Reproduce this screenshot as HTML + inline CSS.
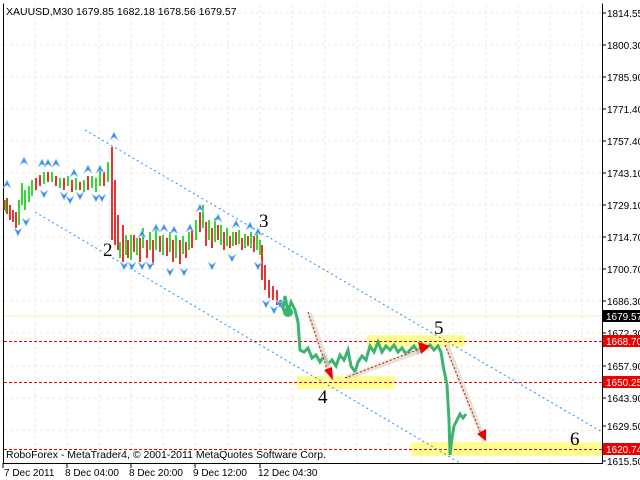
<!DOCTYPE html>
<html><head><meta charset="utf-8"><style>
html,body{margin:0;padding:0;background:#fff;}
svg{display:block;font-family:"Liberation Sans",sans-serif;}
</style></head><body>
<svg width="640" height="480" viewBox="0 0 640 480" xmlns="http://www.w3.org/2000/svg">
<rect width="640" height="480" fill="#fff"/>
<g stroke="#ecebd0" stroke-width="1" stroke-dasharray="3,3">
<path d="M35 4V463M67 4V463M99 4V463M131 4V463M163 4V463M195 4V463M228 4V463M260 4V463M292 4V463M325 4V463M357 4V463M389 4V463M421 4V463M453 4V463M486 4V463M518 4V463M550 4V463M582 4V463"/>
<path d="M4 13H602M4 45H602M4 77H602M4 109H602M4 141H602M4 173H602M4 205H602M4 237H602M4 269H602M4 301H602M4 333H602M4 366H602M4 398H602M4 430H602"/>
</g>
<path d="M3.5 3.5V463.5H602.5V3.5" fill="none" stroke="#000"/>
<path d="M4 316H602" stroke="#f3efc0"/>
<rect x="367" y="335" width="98" height="12" fill="#ffff80" opacity="0.85"/>
<rect x="297" y="376" width="98" height="13" fill="#ffff80" opacity="0.85"/>
<rect x="411" y="442" width="191" height="14" fill="#ffff80" opacity="0.85"/>
<g stroke="#e00" stroke-dasharray="3,2">
<path d="M4 341.5H602M4 382.5H602M4 449.5H602"/>
</g>
<g stroke="#1e90ff" stroke-dasharray="2,3" fill="none">
<path d="M85 130L602 432"/>
<path d="M35 212L460 463"/>
</g>
<g stroke-width="1.6">
<path stroke="#e00000" d="M4 200V210M7 198V214M10 205V220M13 210V222M16 212V228M36 178V190M40 175V186M48 172V182M56 176V186M64 178V190M72 180V192M80 182V190M88 176V190M104 172V186M112 147V240M115 180V245M118 215V250M123 225V262M128 240V258M134 235V252M140 238V262M147 240V258M153 240V265M160 236V252M167 238V256M173 240V262M180 240V264M186 242V258M192 230V248M200 212V232M206 222V246M212 228V248M218 225V240M224 232V250M230 236V248M236 232V245M242 238V250M248 236V246M254 236V252M262 245V280M265 265V290M269 280V298M273 286V300M277 290V305"/>
<path stroke="#00d000" d="M6 200V212M19 200V225M22 183V205M25 190V210M29 186V202M32 180V196M44 172V184M52 172V182M60 178V188M68 176V186M76 178V190M84 180V192M92 176V188M96 178V192M100 170V186M108 162V182M120 242V258M126 235V255M131 235V260M137 238V255M143 228V248M150 232V250M156 230V250M163 235V255M170 232V252M176 235V258M183 236V254M189 232V250M196 220V240M203 205V228M209 220V240M215 218V242M221 225V245M227 228V246M233 232V246M239 230V244M245 234V248M251 232V248M257 232V250M260 240V255"/>
</g>
<polyline fill="none" stroke="#3cb371" stroke-width="3" points="280,300 283,308 285,296 288,312 291,302 295,310 298,322 300,350 304,352 308,348 312,358 316,355 320,362 324,356 328,364 332,360 336,366 340,355 344,360 348,350 351,366 355,372 358,362 362,356 366,360 370,346 374,352 378,342 382,352 386,346 390,350 394,345 398,352 402,348 406,354 410,350 414,346 418,352 422,344 426,348 430,345 434,350 438,346 441,352 443,365 445,375 447,385 449,420 450,455 452,438 454,426 457,420 460,414 463,418 466,414"/>
<circle cx="288" cy="312" r="5" fill="#3cb371"/>
<g fill="#3b8ee8" stroke="#9cc8ff" stroke-width="0.6">
<path d="M3 188l4-8 4 8-4-3z"/><path d="M20 165l4-8 4 8-4-3z"/><path d="M38 167l4-8 4 8-4-3z"/><path d="M44 167l4-8 4 8-4-3z"/><path d="M52 167l4-8 4 8-4-3z"/><path d="M70 177l4-8 4 8-4-3z"/><path d="M84 173l4-8 4 8-4-3z"/><path d="M96 173l4-8 4 8-4-3z"/><path d="M110 140l4-8 4 8-4-3z"/>
<path d="M196 212l4-8 4 8-4-3z"/><path d="M214 222l4-8 4 8-4-3z"/><path d="M246 230l4-8 4 8-4-3z"/><path d="M138 238l4-8 4 8-4-3z"/><path d="M152 232l4-8 4 8-4-3z"/><path d="M160 232l4-8 4 8-4-3z"/><path d="M170 234l4-8 4 8-4-3z"/><path d="M186 232l4-8 4 8-4-3z"/><path d="M232 228l4-8 4 8-4-3z"/><path d="M254 236l4-8 4 8-4-3z"/>
<path d="M14 228l4 8 4-8-4 3z"/><path d="M22 218l4 8 4-8-4 3z"/><path d="M40 190l4 8 4-8-4 3z"/><path d="M60 192l4 8 4-8-4 3z"/><path d="M66 196l4 8 4-8-4 3z"/><path d="M76 192l4 8 4-8-4 3z"/><path d="M92 194l4 8 4-8-4 3z"/><path d="M98 194l4 8 4-8-4 3z"/>
<path d="M120 262l4 8 4-8-4 3z"/><path d="M128 262l4 8 4-8-4 3z"/><path d="M138 262l4 8 4-8-4 3z"/><path d="M146 262l4 8 4-8-4 3z"/><path d="M166 268l4 8 4-8-4 3z"/><path d="M180 268l4 8 4-8-4 3z"/><path d="M208 262l4 8 4-8-4 3z"/><path d="M228 254l4 8 4-8-4 3z"/><path d="M254 262l4 8 4-8-4 3z"/><path d="M262 300l4 8 4-8-4 3z"/><path d="M270 306l4 8 4-8-4 3z"/><path d="M276 300l4 8 4-8-4 3z"/>
</g>
<g stroke="#d8d8c8" stroke-width="5" opacity="0.7" fill="none" stroke-linecap="round">
<path d="M310 315L332 378M348 377L428 348M447 346L484 440"/>
</g>
<g stroke="#e00" stroke-width="1" stroke-dasharray="2,2" fill="none">
<path d="M308 312L328 372M345 378L422 348M445 345L481 434"/>
</g>
<g fill="#e00">
<path d="M324 370l9 10-1-13z"/><path d="M418 342l12 4-9 8z"/><path d="M477 434l9 7 0-12z"/>
</g>
<g font-family="'Liberation Serif',serif" font-size="19" fill="#000">
<text x="103" y="256">2</text><text x="259" y="227">3</text><text x="318" y="403">4</text><text x="434" y="334">5</text><text x="570" y="445">6</text>
</g>
<text x="6" y="15" font-size="10.5" fill="#000">XAUUSD,M30  1679.85 1682.18 1678.56 1679.57</text>
<text x="6" y="458" font-size="10.5" fill="#000">RoboForex - MetaTrader4, © 2001-2011 MetaQuotes Software Corp.</text>
<g stroke="#000"><path d="M602 13h4M602 45h4M602 77h4M602 109h4M602 141h4M602 173h4M602 205h4M602 237h4M602 269h4M602 301h4M602 333h4M602 366h4M602 398h4M602 426h4M602 461h4"/>
<path d="M3 463v5M67 463v5M131 463v5M195 463v5M260 463v5"/></g>
<g font-size="10" fill="#000">
<text x="607" y="17">1814.55</text><text x="607" y="49">1800.30</text><text x="607" y="81">1785.90</text><text x="607" y="113">1771.40</text><text x="607" y="145">1757.40</text><text x="607" y="177">1743.10</text><text x="607" y="209">1729.10</text><text x="607" y="241">1714.70</text><text x="607" y="273">1700.70</text><text x="607" y="305">1686.30</text><text x="607" y="337">1672.30</text><text x="607" y="370">1657.90</text><text x="607" y="402">1643.90</text><text x="607" y="430">1629.50</text><text x="607" y="465">1615.50</text>
</g>
<rect x="603" y="310" width="37" height="12" fill="#000"/><text x="606" y="320" font-size="10" fill="#fff">1679.57</text>
<rect x="603" y="335" width="37" height="12" fill="#e00"/><text x="606" y="345" font-size="10" fill="#fff">1668.70</text>
<rect x="603" y="376" width="37" height="12" fill="#e00"/><text x="606" y="386" font-size="10" fill="#fff">1650.25</text>
<rect x="603" y="443" width="37" height="12" fill="#e00"/><text x="606" y="453" font-size="10" fill="#fff">1620.74</text>
<g font-size="10" fill="#000">
<text x="4" y="476">7 Dec 2011</text><text x="65" y="476">8 Dec 04:00</text><text x="129" y="476">8 Dec 20:00</text><text x="193" y="476">9 Dec 12:00</text><text x="258" y="476">12 Dec 04:30</text>
</g>
</svg>
</body></html>
